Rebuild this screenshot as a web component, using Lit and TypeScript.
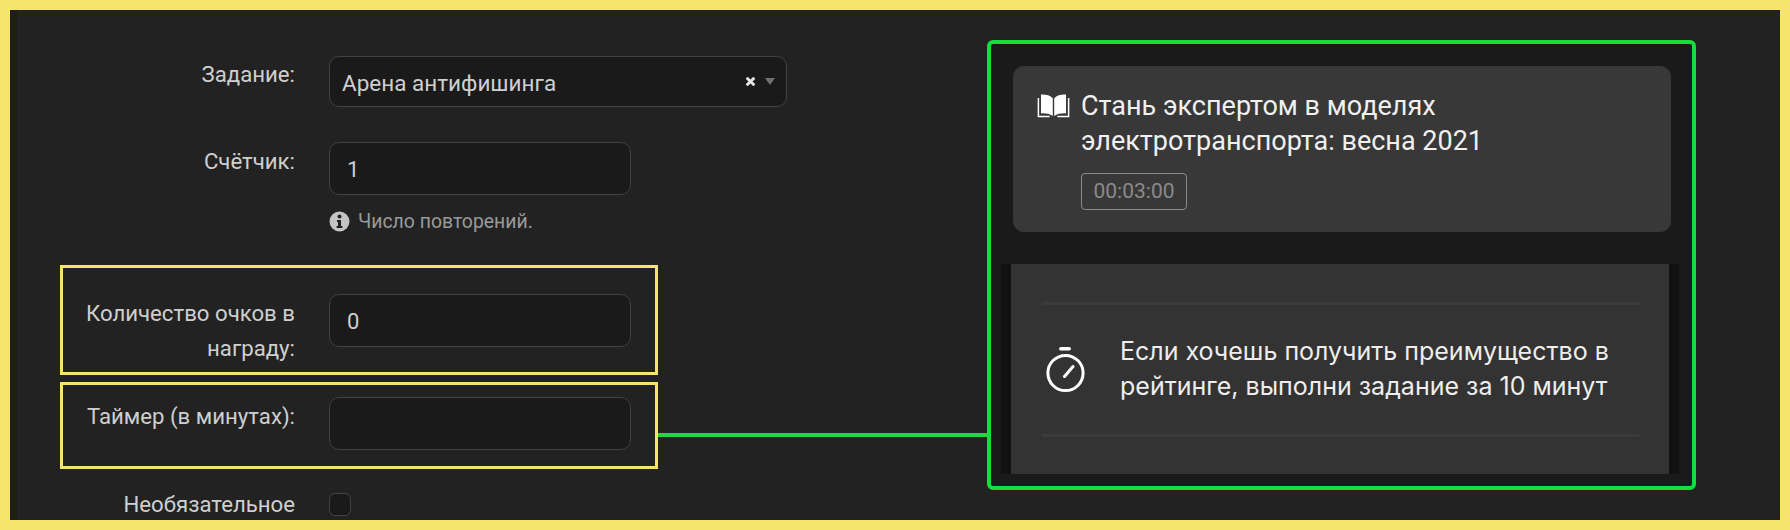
import { LitElement, html, css, svg } from 'lit';
import { customElement } from 'lit/decorators.js';

const bookIcon = svg`
  <svg class="book" viewBox="0 0 33 24">
    <path d="M15.8 4.2C13 1.2 9 .4 4 .6v18.8c4.6-.2 8.8.5 11.8 2.6z" fill="#fff"/>
    <path d="M17.2 4.2C20 1.2 24 .4 29 .6v18.8c-4.6-.2-8.8.5-11.8 2.6z" fill="#fff"/>
    <path d="M1.4 4v18.4h11.2M31.6 4v18.4H20.4" fill="none" stroke="#fff" stroke-width="1.5"/>
  </svg>`;

const timerIcon = svg`
  <svg class="timer" viewBox="0 0 40 46">
    <rect x="13" y="0" width="12" height="3.6" rx="1.8" fill="#fff"/>
    <circle cx="19.5" cy="26" r="17.6" fill="none" stroke="#fff" stroke-width="3"/>
    <path d="M18.5 29.5 27 19.5" fill="none" stroke="#fff" stroke-width="3" stroke-linecap="round"/>
  </svg>`;

@customElement('app-root')
export class AppRoot extends LitElement {
  static styles = css`
    :host {
      display: block;
      box-sizing: border-box;
      position: relative;
      width: 1790px;
      height: 530px;
      overflow: hidden;
      border: 10px solid #f5e56d;
      background: #222222;
      font-family: 'Roboto', 'Noto Sans', sans-serif;
      color: #cfcfcf;
    }
    .page {
      display: flex;
      height: 100%;
      border-left: 7px solid #1d1d1d;
      box-sizing: border-box;
    }
    .form {
      width: 641px;
      margin-left: 43px;
      flex: none;
      padding-top: 46px;
    }
    .row {
      display: grid;
      grid-template-columns: 232px 1fr;
      column-gap: 34px;
      box-sizing: border-box;
      width: 598px;
      border: 3px solid transparent;
    }
    .row.flagged {
      border-color: #f5e56d;
    }
    .row > label {
      text-align: right;
      font-size: 22.2px;
      line-height: 35px;
      color: #cfcfcf;
    }
    .task {
      height: 57px;
      margin-top: -3px;
    }
    .task label {
      padding-top: 1px;
    }
    .counter {
      margin-top: 29px;
    }
    .counter label {
      padding-top: 2px;
    }
    .points {
      height: 110px;
      margin-top: 33px;
      padding-top: 26px;
    }
    .points label {
      padding-top: 2px;
    }
    .timer-row {
      height: 87px;
      margin-top: 7px;
      padding-top: 12px;
    }
    .timer-row label {
      padding-top: 2px;
    }
    .optional {
      margin-top: 21px;
    }
    .optional label {
      line-height: 23px;
    }
    .field {
      box-sizing: border-box;
      width: 302px;
      height: 53px;
      border: 1px solid #424242;
      border-radius: 10px;
      background: #1a1a1a;
      padding: 0 17px;
      font-size: 22px;
      line-height: 53px;
      color: #cfcfcf;
    }
    .select {
      display: flex;
      align-items: center;
      justify-content: space-between;
      width: 458px;
      height: 51px;
      padding: 4px 11px 0 12px;
      font-size: 22.5px;
    }
    .select-icons {
      display: flex;
      align-items: center;
      gap: 9px;
      margin-top: -4px;
    }
    .clear {
      width: 11px;
      height: 11px;
    }
    .arrow {
      width: 0;
      height: 0;
      border-left: 5px solid transparent;
      border-right: 5px solid transparent;
      border-top: 7px solid #707070;
    }
    .help {
      display: flex;
      align-items: center;
      gap: 8px;
      margin: 13px 0 0 269px;
      height: 21px;
      font-size: 19.4px;
      color: #9a9a9a;
    }
    .info {
      width: 21px;
      height: 21px;
      flex: none;
    }
    .check {
      box-sizing: border-box;
      width: 22px;
      height: 23px;
      border: 1px solid #424242;
      border-radius: 6px;
      background: #1a1a1a;
    }
    .panel {
      box-sizing: border-box;
      width: 709px;
      height: 450px;
      margin: 30px 0 0 286px;
      flex: none;
      border: 4px solid #16dc3c;
      border-radius: 6px;
      background: #1a1a1a;
      padding: 22px 0 0 10px;
    }
    .course {
      box-sizing: border-box;
      width: 658px;
      height: 166px;
      margin-left: 12px;
      padding: 23px 24px;
      border-radius: 11px;
      background: #383838;
      display: flex;
      gap: 11px;
      color: #f0f0f0;
    }
    .book {
      width: 33px;
      height: 24px;
      margin-top: 5px;
      flex: none;
    }
    .course-title {
      font-size: 27px;
      line-height: 35px;
    }
    .badge {
      display: inline-block;
      margin-top: 14px;
      box-sizing: border-box;
      height: 37px;
      width: 106px;
      border: 1px solid #8a8a8a;
      border-radius: 4px;
      text-align: center;
      font-size: 21px;
      line-height: 35px;
      color: #8a8a8a;
    }
    .tip-wrap {
      box-sizing: border-box;
      width: 678px;
      height: 210px;
      margin-top: 32px;
      padding: 0 10px;
      background: #111111;
    }
    .tip {
      box-sizing: border-box;
      height: 100%;
      padding: 38px 30px 0 31px;
      background: #333333;
    }
    .tip-body {
      box-sizing: border-box;
      height: 135px;
      border-top: 3px solid #3b3b3b;
      border-bottom: 3px solid #3b3b3b;
      display: flex;
      align-items: center;
      gap: 34px;
      padding-left: 4px;
    }
    .timer {
      width: 40px;
      height: 46px;
      flex: none;
    }
    .tip-text {
      font-family: 'Inter', 'Roboto', sans-serif;
      font-size: 25px;
      line-height: 35px;
      margin-top: -2px;
      color: #eeeeee;
    }
    .connector {
      position: absolute;
      left: 648px;
      top: 423px;
      width: 330px;
      height: 4px;
      background: #16dc3c;
    }
  `;

  render() {
    return html`
      <div class="page">
        <div class="form">
          <div class="row task">
            <label>Задание:</label>
            <div class="field select">
              <span>Арена антифишинга</span>
              <span class="select-icons">
                <svg class="clear" viewBox="0 0 10 10">
                  <path d="M1.5 1.5l7 7M8.5 1.5l-7 7" stroke="#e8e8e8" stroke-width="2.6" />
                </svg>
                <span class="arrow"></span>
              </span>
            </div>
          </div>
          <div class="row counter">
            <label>Счётчик:</label>
            <div class="field">1</div>
          </div>
          <div class="help">
            <svg class="info" viewBox="0 0 21 21">
              <circle cx="10.5" cy="10.5" r="10" fill="#c4c4c4" />
              <circle cx="10.5" cy="5.6" r="2" fill="#222" />
              <path d="M8 9h4v6h1.4v2H7.6v-2H9v-4H8z" fill="#222" />
            </svg>
            <span>Число повторений.</span>
          </div>
          <div class="row flagged points">
            <label>Количество очков в награду:</label>
            <div class="field">0</div>
          </div>
          <div class="row flagged timer-row">
            <label>Таймер (в минутах):</label>
            <div class="field"></div>
          </div>
          <div class="row optional">
            <label>Необязательное</label>
            <div class="check"></div>
          </div>
        </div>
        <div class="panel">
          <div class="course">
            ${bookIcon}
            <div>
              <div class="course-title">Стань экспертом в моделях<br />электротранспорта: весна 2021</div>
              <span class="badge">00:03:00</span>
            </div>
          </div>
          <div class="tip-wrap">
            <div class="tip">
              <div class="tip-body">
                ${timerIcon}
                <div class="tip-text">Если хочешь получить преимущество в<br />рейтинге, выполни задание за 10 минут</div>
              </div>
            </div>
          </div>
        </div>
      </div>
      <div class="connector"></div>
    `;
  }
}
